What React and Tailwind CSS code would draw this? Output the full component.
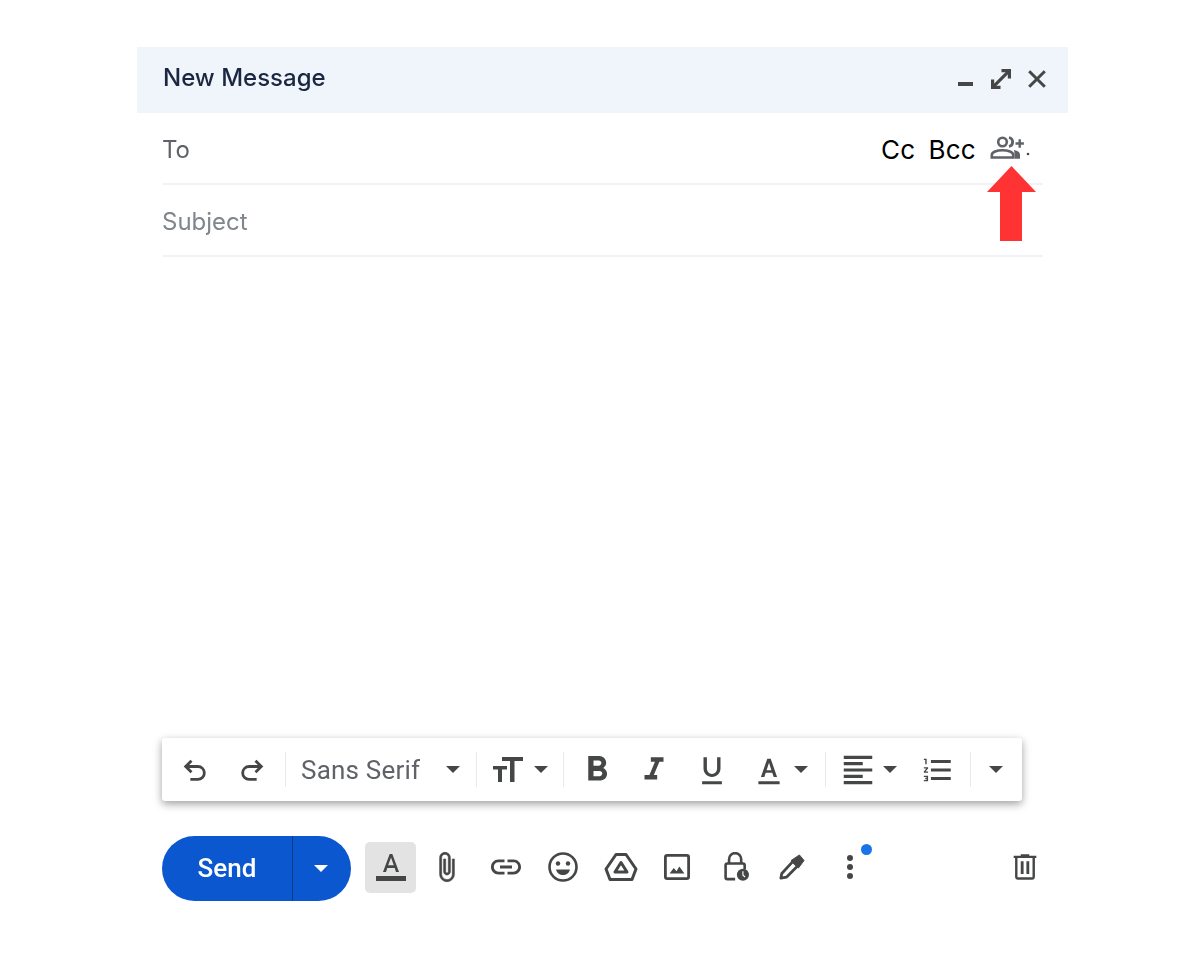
const P = ({ d, c = "w-6 h-6", vb = "0 0 24 24", children }) => (
  <svg viewBox={vb} className={`${c} fill-current shrink-0`}>
    {d && <path d={d} />}
    {children}
  </svg>
);
const S = ({ c = "w-6 h-6", children, w = 2 }) => (
  <svg viewBox="0 0 24 24" className={`${c} shrink-0`} fill="none" stroke="currentColor" strokeWidth={w}>
    {children}
  </svg>
);
const Caret = ({ c = "" }) => (
  <svg viewBox="0 0 14 7" className={`w-[14px] h-[7px] fill-current shrink-0 ${c}`}>
    <path d="M0 0h14L7 7z" />
  </svg>
);
const Div = () => <div className="w-px h-[35px] bg-[#e6eaed] shrink-0" />;

export default function App() {
  return (
    <div className="relative w-[1200px] h-[960px] bg-white pt-[47px] pl-[137px] font-['Inter',sans-serif]">
      <div className="w-[931px]">
        <div className="h-[66px] bg-[#f0f4fb] flex items-center pl-[26px] pr-[22px] text-[#444746]">
          <span className="text-[24px] font-medium text-[#1a2740] flex-1 mt-[-4px] blur-[0.5px] whitespace-nowrap">New Message</span>
          <div className="flex items-center mt-[-3px] blur-[0.5px]">
            <div className="w-[15px] h-[4px] bg-[#444746] mt-[11px] mr-[18px]" />
            <svg viewBox="0 0 20 20" className="w-[20px] h-[20px] mr-[17px] shrink-0" fill="none" stroke="currentColor" strokeWidth="3.200">
              <path d="M10.500 1.600h7.900v7.900" />
              <path d="M18.400 1.600 1.600 18.400" />
              <path d="M1.600 10.500v7.900h7.900" />
            </svg>
            <svg viewBox="0 0 18 18" className="w-[18px] h-[18px] shrink-0" fill="none" stroke="currentColor" strokeWidth="3">
              <path d="M1.200 1.200 16.800 16.800M16.800 1.200 1.200 16.800" />
            </svg>
          </div>
        </div>
        <div className="ml-[26px] w-[880px] h-[72px] border-b-2 border-[#f0f2f3] flex items-center pt-[2px] text-[24px]">
          <span className="text-[#5f6368] flex-1 ml-[-1px] mt-[2px] blur-[0.5px]">To</span>
          <span className="text-[26px] text-black mr-[13px] tracking-[0.3px]">Cc</span>
          <span className="text-[26px] text-black mr-[14px] tracking-[0.3px]">Bcc</span>
          <svg viewBox="0 0 40 24" className="w-[40px] h-[24px] mr-[13px] text-[#5f6368] shrink-0 mb-[2px] blur-[0.5px]">
            <circle cx="12.500" cy="6" r="4.300" fill="none" stroke="currentColor" strokeWidth="2.600" />
            <path d="M1.800 21.500v-2.500c0-3 5-4.800 10.700-4.800s10.700 1.800 10.700 4.800v2.500z" fill="none" stroke="currentColor" strokeWidth="2.600" />
            <path d="M19 1.500a4.600 4.600 0 0 1 0 9" fill="none" stroke="currentColor" strokeWidth="2.800" />
            <path d="M24 14c4 .6 6 2.200 6 5v3.800h-5.500V19c0-2-.2-3.500-.5-5z" fill="currentColor" />
            <path d="M25.500 6.300h3v-3h2.400v3h3v2.400h-3v3h-2.400v-3h-3z" fill="currentColor" />
            <circle cx="38" cy="18" r="1.300" fill="#3c4a60" />
          </svg>
        </div>
        <div className="ml-[26px] w-[880px] h-[72px] border-b-2 border-[#f0f2f3] flex items-center pt-[2px] text-[24px] text-[#80868b]">
          <span className="ml-[-1px] mt-[2px] blur-[0.5px]">Subject</span>
        </div>
        <div className="h-[481px]" />
        <div className="ml-[25px] w-[860px] h-[63px] bg-white rounded-[3px] shadow-[0_3px_8px_rgba(0,0,0,0.38)] flex items-center text-[#444746]">
          <div className="flex items-center flex-1 blur-[0.5px]">
            <div className="w-[19px]" />
            <S c="w-[28px] h-[28px]" w={2.400}><path d="M9 14 4 9l5-5" /><path d="M4 9h10.500a5.500 5.500 0 0 1 0 11H8" /></S>
            <div className="w-[29px]" />
            <S c="w-[28px] h-[28px]" w={2.400}><path d="m15 14 5-5-5-5" /><path d="M20 9H9.500a5.500 5.500 0 0 0 0 11H16" /></S>
            <div className="w-[19px]" />
            <Div />
            <span className="ml-[15px] w-[123px] text-[26px] leading-none text-[#5f6368] tracking-[0.2px] whitespace-nowrap font-['Roboto',sans-serif]">Sans Serif</span>
            <Caret c="ml-[22px]" />
            <div className="w-[16px]" />
            <Div />
            <svg viewBox="0 0 30 26" className="w-[30px] h-[26px] fill-current ml-[16px] shrink-0"><path d="M9 0h21v4h-8.500v21h-4.500V4H9zM0 9h14v3.500H9V25H5V12.500H0z" /></svg>
            <Caret c="ml-[11px]" />
            <div className="w-[15px]" />
            <Div />
            <P c="w-[42px] h-[42px] ml-[12px]" d="M15.600 10.790c.97-.67 1.650-1.770 1.650-2.790 0-2.260-1.750-4-4-4H7v14h7.040c2.090 0 3.710-1.700 3.710-3.790 0-1.520-.86-2.820-2.150-3.420zM10 6.500h3c.83 0 1.500.67 1.500 1.500s-.67 1.500-1.500 1.500h-3v-3zm3.500 9H10v-3h3.500c.83 0 1.500.67 1.500 1.500s-.67 1.500-1.500 1.500z" />
            <P c="w-[38px] h-[38px] ml-[17px]" d="M10 4v2.800h2.600L9.100 15.200H6V18h8v-2.800h-2.100l3.500-8.400H18V4z" />
            <P c="w-[34px] h-[34px] ml-[22px]" d="M12 17c3.310 0 6-2.690 6-6V3h-2.400v8c0 2.100-1.500 3.800-3.600 3.800S8.400 13.100 8.400 11V3H6v8c0 3.310 2.690 6 6 6zm-7 3v2h14v-2H5z" />
            <P c="w-[34px] h-[34px] ml-[23px]" d="M4.500 20h15v2h-15zM6.300 17h2.400l1-3h4.600l1 3h2.400L13.200 4h-2.400zm4-4.800 1.700-5.400 1.700 5.400z" />
            <Caret c="ml-[8px]" />
            <div className="w-[17px]" />
            <Div />
            <P c="w-[38px] h-[38px] ml-[13px]" d="M15 15H3v2h12zM15 7H3v2h12zM3 13h18v-2H3zM3 21h18v-2H3zM3 3v2h18V3z" />
            <Caret c="ml-[6px]" />
            <div className="w-[24px]" />
            <P c="w-[34px] h-[34px]" d="M2 17h2v.5H3v1h1v.5H2v1h3v-4H2v1zm1-9h1V4H2v1h1v3zm-1 3h1.800L2 13.100v.9h3v-1H3.200L5 10.900V10H2v1zM7 5v2h14V5zM7 19h14v-2H7zM7 13h14v-2H7z" />
            <div className="w-[15px]" />
            <Div />
            <Caret c="ml-[18px]" />
          </div>
        </div>
        <div className="ml-[25px] mt-[35px] w-[880px] h-[65px] flex items-center text-[#444746]">
          <div className="w-[189px] h-[65px] rounded-full bg-[#0b57d0] flex items-center text-white font-['Roboto',sans-serif]">
            <span className="w-[130px] text-center text-[26px] font-medium blur-[0.3px]">Send</span>
            <div className="w-px h-full bg-[#0a3a82]" />
            <Caret c="ml-[21px]" />
          </div>
          <div className="flex items-center flex-1 mb-[3px] blur-[0.5px]">
            <div className="w-[51px] h-[51px] ml-[14px] rounded-[5px] bg-[#e3e3e3] flex items-center justify-center">
              <svg viewBox="0 0 30 32" className="w-[30px] h-[32px] fill-current"><path d="M0 25h30v5H0zM7 21h3l1.300-4h7.400l1.300 4h3L16.300 3h-2.600zm5.200-6.800L15 6.500l2.800 7.700z" /></svg>
            </div>
            <svg viewBox="2 0 21 24" className="w-[32px] h-[32px] ml-[15px] fill-current stroke-current stroke-[0.5] shrink-0">
              <path d="M16.500 6v11.500c0 2.210-1.790 4-4 4s-4-1.790-4-4V5c0-1.380 1.120-2.500 2.500-2.500s2.500 1.120 2.500 2.500v10.500c0 .55-.45 1-1 1s-1-.45-1-1V6H10v9.500c0 1.380 1.120 2.500 2.500 2.500s2.500-1.120 2.500-2.500V5c0-2.210-1.790-4-4-4S7 2.790 7 5v12.500c0 3.040 2.460 5.500 5.500 5.500s5.500-2.460 5.500-5.500V6h-1.500z" />
            </svg>
            <P c="w-[36px] h-[36px] ml-[25px]" d="M3.900 12c0-1.710 1.390-3.100 3.100-3.100h4V7H7c-2.760 0-5 2.240-5 5s2.240 5 5 5h4v-1.900H7c-1.710 0-3.100-1.390-3.100-3.100zM8 13h8v-2H8v2zm9-6h-4v1.900h4c1.710 0 3.100 1.390 3.100 3.100s-1.390 3.100-3.100 3.100h-4V17h4c2.760 0 5-2.240 5-5s-2.240-5-5-5z" />
            <svg viewBox="0 0 32 32" className="w-[32px] h-[32px] ml-[23px] shrink-0">
              <circle cx="16" cy="16" r="13.500" fill="none" stroke="currentColor" strokeWidth="2.600" />
              <circle cx="11" cy="12.500" r="2.200" fill="currentColor" />
              <circle cx="21" cy="12.500" r="2.200" fill="currentColor" />
              <path d="M9 18.500h14c-1 3.800-3.800 5.500-7 5.500s-6-1.700-7-5.500z" fill="currentColor" />
            </svg>
            <svg viewBox="0 0 34 28" className="w-[34px] h-[28px] ml-[25px] shrink-0" fill="none" stroke="currentColor" strokeLinejoin="round">
              <path d="M12 1.500h10l10 14.500-4 10.500H6L2 16z" strokeWidth="3" />
              <path d="M17 9.500l6 9.500H11z" strokeWidth="3" />
            </svg>
            <svg viewBox="0 0 28 28" className="w-[26px] h-[26px] ml-[26px] shrink-0">
              <rect x="1.500" y="1.500" width="25" height="25" rx="2" fill="none" stroke="currentColor" strokeWidth="3" />
              <path d="M6 21l4.500-6 3 3.500 3-5L22 21z" fill="currentColor" />
            </svg>
            <svg viewBox="0 0 30 34" className="w-[26px] h-[30px] ml-[33px] shrink-0">
              <path d="M7 13V8a7 7 0 0 1 14 0v5" fill="none" stroke="currentColor" strokeWidth="3" />
              <path d="M14 31H5a2 2 0 0 1-2-2V15a2 2 0 0 1 2-2h18a2 2 0 0 1 2 2v5" fill="none" stroke="currentColor" strokeWidth="3" />
              <circle cx="23" cy="26" r="7" fill="currentColor" />
              <path d="M23 22v4.500l2.500 2" fill="none" stroke="#fff" strokeWidth="1.300" />
            </svg>
            <svg viewBox="0 0 28 28" className="w-[26px] h-[26px] ml-[30px] shrink-0" fill="none" stroke="currentColor">
              <path d="M2 26l1-5L15 8l5 5L8 25z" strokeWidth="3" strokeLinejoin="round" />
              <path d="M13 7l8 8 6-8-5-6z" fill="currentColor" strokeWidth="1" />
              <path d="M7 21 15 12" strokeWidth="1.500" stroke="#fff" />
            </svg>
            <div className="relative ml-[42px] w-[6px] h-[24px] shrink-0 flex flex-col justify-between">
              <div className="w-[6px] h-[6px] rounded-full bg-[#444746]" />
              <div className="w-[6px] h-[6px] rounded-full bg-[#444746]" />
              <div className="w-[6px] h-[6px] rounded-full bg-[#444746]" />
              <div className="absolute left-[14px] top-[-11px] w-[11px] h-[11px] rounded-full bg-[#1a73e8]" />
            </div>
            <div className="flex-1" />
            <P c="w-[34px] h-[34px]" d="M15 4V3H9v1H4v1.700h1V19c0 1.100.9 2 2 2h10c1.100 0 2-.9 2-2V5.700h1V4h-5zm2.300 15.300H6.700V5.700h10.600zM9 8h2v9H9zm4 0h2v9h-2z" />
          </div>
        </div>
      </div>
      <svg viewBox="0 0 49 75" className="absolute left-[987px] top-[166px] w-[49px] h-[75px]">
        <path d="M24.500 0 49 26H35v49H13V26H0z" fill="#ff3333" />
      </svg>
    </div>
  );
}
